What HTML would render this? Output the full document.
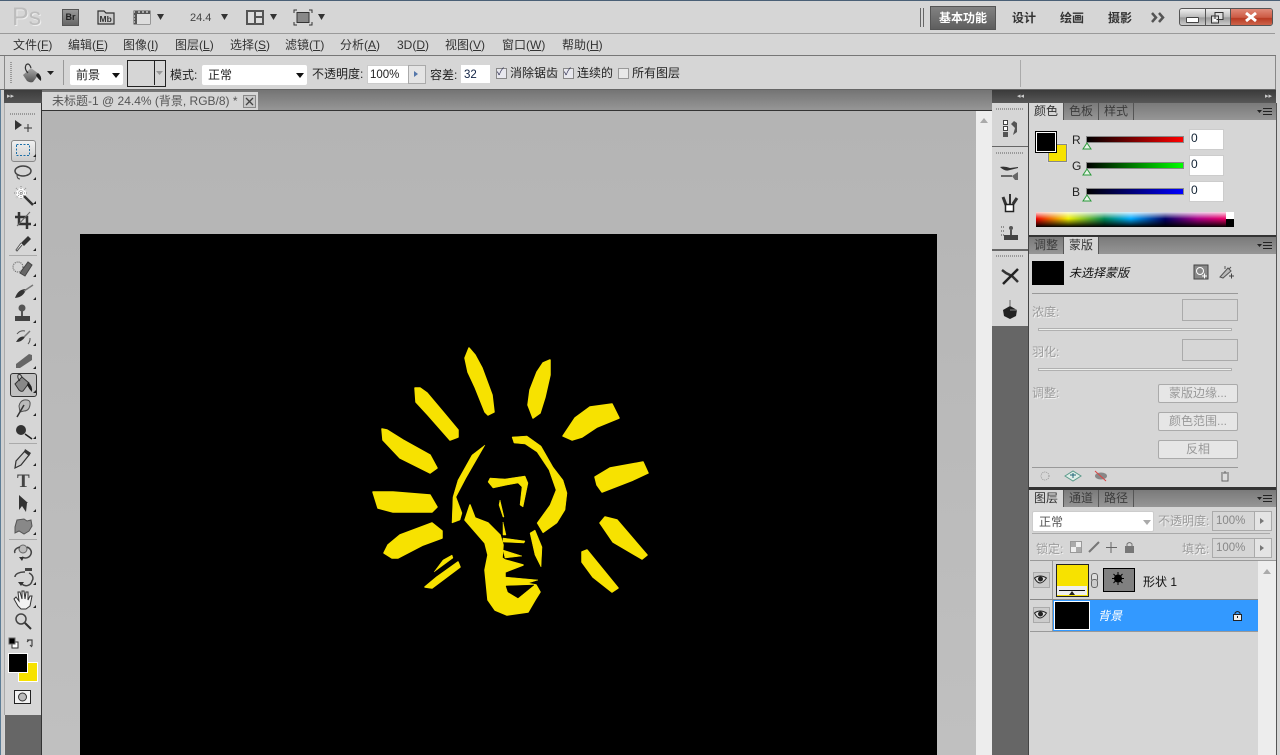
<!DOCTYPE html>
<html><head><meta charset="utf-8"><style>
html,body{margin:0;padding:0;width:1280px;height:755px;overflow:hidden;background:#d6d6d6}
body{position:relative;font-family:"Liberation Sans","WenQuanYi Zen Hei","Noto Sans CJK SC",sans-serif;font-size:12px;color:#222}
.a,.t{position:absolute}
.t{white-space:nowrap;line-height:14px}
.g{color:#9c9c9c;text-shadow:1px 1px 0 #f2f2f2}
.w{background:#fff}
.tab{position:absolute;height:17px;line-height:17px;text-align:center;color:#3c3c3c;border-right:1px solid #555;width:34px}
.on{background:#d6d6d6;color:#333}
.bar{position:absolute;left:1029px;width:247px;background:linear-gradient(#7a7a7a,#969696)}
.btn{position:absolute;left:1158px;width:78px;height:17px;line-height:17px;background:#e6e6e6;border:1px solid #aaa;border-radius:2px;text-align:center;color:#999}
svg{position:absolute;overflow:visible}
</style></head><body>
<div class="a" style="left:0;top:0;width:1280px;height:1px;background:#4a6076"></div>
<div class="a" style="left:0;top:33px;width:1275px;height:1px;background:#9a9a9a"></div>
<div class="a" style="left:0;top:55px;width:1276px;height:1px;background:#777"></div>
<div class="a" style="left:1275px;top:56px;width:1px;height:33px;background:#888"></div>
<div class="a" style="left:0;top:89px;width:1276px;height:1px;background:#666"></div>

<!-- title row -->
<div class="t" style="left:12px;top:3px;font-size:25px;line-height:28px;color:#bdbdbd;text-shadow:1px 1px 0 #eee">Ps</div>
<div class="a" style="left:62px;top:9px;width:15px;height:15px;background:linear-gradient(#999,#666);border:1px solid #555;color:#222;font:bold 9px/15px 'Liberation Sans';text-align:center">Br</div>
<svg style="left:97px;top:9px" width="20" height="17"><path d="M1 15V2H7L9 4H17V15Z" fill="#ccc" stroke="#333" stroke-width="1.2"/><text x="2.500" y="13" font-size="8.500" font-weight="bold" fill="#333" font-family="Liberation Sans">Mb</text></svg>
<svg style="left:133px;top:10px" width="18" height="15"><rect x=".5" y=".5" width="17" height="14" fill="#555"/><rect x="4" y="4" width="13" height="10" fill="#ddd"/><path d="M1 2h1M5 2h2M9 2h2M13 2h2M1 6h1M1 9h1M1 12h1" stroke="#fff"/></svg>
<svg style="left:156px;top:14px" width="9" height="6"><path d="M1 0H8L4.500 6Z" fill="#333"/></svg>
<div class="t" style="left:190px;top:11px;font-size:11px;color:#444">24.4</div>
<svg style="left:220px;top:14px" width="9" height="6"><path d="M1 0H8L4.500 6Z" fill="#333"/></svg>
<svg style="left:246px;top:10px" width="18" height="15"><rect width="18" height="15" fill="#555"/><path d="M2 2h6v11H2zM10 2h6v4h-6zM10 8h6v5h-6z" fill="#ddd"/></svg>
<svg style="left:269px;top:14px" width="9" height="6"><path d="M1 0H8L4.500 6Z" fill="#333"/></svg>
<svg style="left:294px;top:10px" width="18" height="15"><path d="M0 3V0H3M15 0H18V3M18 12V15H15M3 15H0V12" fill="none" stroke="#333"/><rect x="3" y="2.500" width="12" height="10" fill="#888" stroke="#333"/></svg>
<svg style="left:317px;top:14px" width="9" height="6"><path d="M1 0H8L4.500 6Z" fill="#333"/></svg>

<div class="a" style="left:920px;top:8px;width:1px;height:19px;background:#666"></div>
<div class="a" style="left:923px;top:8px;width:1px;height:19px;background:#666"></div>
<div class="a" style="left:930px;top:6px;width:64px;height:22px;background:linear-gradient(#828282,#5e5e5e);border:1px solid #555;color:#fff;font-weight:bold;line-height:22px;text-align:center">基本功能</div>
<div class="t" style="left:1012px;top:11px;font-weight:bold;color:#333">设计</div>
<div class="t" style="left:1060px;top:11px;font-weight:bold;color:#333">绘画</div>
<div class="t" style="left:1108px;top:11px;font-weight:bold;color:#333">摄影</div>
<svg style="left:1151px;top:12px" width="15" height="11"><path d="M1 1L5 5.500 1 10M8 1L12 5.500 8 10" fill="none" stroke="#555" stroke-width="2.500"/></svg>
<div class="a" style="left:1179px;top:8px;width:92px;height:16px;border:1px solid #555;border-radius:3px;overflow:hidden;background:linear-gradient(#eee,#bbb 50%,#999 55%,#ccc)">
<div class="a" style="left:25px;top:0;width:1px;height:17px;background:#555"></div>
<div class="a" style="left:50px;top:0;width:1px;height:17px;background:#555"></div>
<div class="a" style="left:51px;top:0;width:41px;height:17px;background:linear-gradient(#e08a78,#cc5a44 50%,#b83a22 55%,#d06a50)"></div>
</div>
<div class="a" style="left:1186px;top:17px;width:11px;height:4px;background:#fff;border:1px solid #444;border-radius:1px"></div>
<svg style="left:1211px;top:12px" width="13" height="12"><path d="M4 .5h8v7H4zM.5 4h7v7h-7z" fill="#ddd" stroke="#333"/><path d="M2.500 7h3v2h-3z" fill="#fff"/></svg>
<svg style="left:1244px;top:12px" width="14" height="10"><path d="M2 1L12 9M12 1L2 9" stroke="#fff" stroke-width="3"/></svg>

<!-- menu -->
<div class="t" style="left:13px;top:38px;color:#333">文件(<u>F</u>)</div>
<div class="t" style="left:68px;top:38px;color:#333">编辑(<u>E</u>)</div>
<div class="t" style="left:123px;top:38px;color:#333">图像(<u>I</u>)</div>
<div class="t" style="left:175px;top:38px;color:#333">图层(<u>L</u>)</div>
<div class="t" style="left:230px;top:38px;color:#333">选择(<u>S</u>)</div>
<div class="t" style="left:285px;top:38px;color:#333">滤镜(<u>T</u>)</div>
<div class="t" style="left:340px;top:38px;color:#333">分析(<u>A</u>)</div>
<div class="t" style="left:397px;top:38px;color:#333">3D(<u>D</u>)</div>
<div class="t" style="left:445px;top:38px;color:#333">视图(<u>V</u>)</div>
<div class="t" style="left:502px;top:38px;color:#333">窗口(<u>W</u>)</div>
<div class="t" style="left:562px;top:38px;color:#333">帮助(<u>H</u>)</div>

<!-- options bar -->
<div class="a" style="left:4px;top:56px;width:1px;height:33px;background:#888"></div>
<div class="a" style="left:10px;top:62px;width:2px;height:22px;background:repeating-linear-gradient(#999 0 1px,transparent 1px 2px)"></div>
<svg style="left:22px;top:63px" width="20" height="20"><defs><linearGradient id="bk" x1="0" y1="0" x2="0" y2="1"><stop offset="0" stop-color="#aaa"/><stop offset="1" stop-color="#555"/></linearGradient></defs><path d="M1 12L9 5 17 11 11 19Q8 20 5 18Z" fill="url(#bk)"/><path d="M9 5Q7 -1 4 2 2 6 6 10" fill="none" stroke="#333" stroke-width="1.200"/><path d="M16 10Q20 13 19 18 15 15 14 12Z" fill="#222"/></svg>
<svg style="left:47px;top:71px" width="7" height="4"><path d="M0 0H7L3.500 4Z" fill="#222"/></svg>
<div class="a" style="left:63px;top:60px;width:1px;height:25px;background:#999"></div>
<div class="a w" style="left:70px;top:65px;width:53px;height:20px;border-radius:2px"></div>
<div class="t" style="left:76px;top:68px">前景</div>
<svg style="left:112px;top:73px" width="8" height="5"><path d="M0 0H8L4 5Z" fill="#111"/></svg>
<div class="a" style="left:127px;top:60px;width:37px;height:25px;border:1px solid #222;background:#d6d6d6"></div>
<div class="a" style="left:154px;top:60px;width:1px;height:25px;background:#222"></div>
<svg style="left:156px;top:71px" width="7" height="4"><path d="M0 0H7L3.500 4Z" fill="#999"/></svg>
<div class="t" style="left:170px;top:68px">模式:</div>
<div class="a w" style="left:202px;top:65px;width:105px;height:20px;border-radius:2px"></div>
<div class="t" style="left:208px;top:68px">正常</div>
<svg style="left:296px;top:73px" width="8" height="5"><path d="M0 0H8L4 5Z" fill="#111"/></svg>
<div class="t" style="left:312px;top:67px">不透明度:</div>
<div class="a w" style="left:367px;top:65px;width:40px;height:17px;border:1px solid #ccc"></div>
<div class="t" style="left:370px;top:68px;font-size:11.500px">100%</div>
<div class="a" style="left:408px;top:65px;width:16px;height:17px;background:#e4e4e4;border:1px solid #aaa"></div>
<svg style="left:414px;top:71px" width="4" height="6"><path d="M0 0L4 3 0 6Z" fill="#57a"/></svg>
<div class="t" style="left:430px;top:68px">容差:</div>
<div class="a w" style="left:461px;top:65px;width:29px;height:18px"></div>
<div class="t" style="left:464px;top:68px;font-size:11.500px;color:#124">32</div>
<div class="a" style="left:496px;top:68px;width:9px;height:9px;background:#e8e8ee;border:1px solid #888"></div>
<div class="t" style="left:497px;top:66px;font-size:10px;color:#335">✓</div>
<div class="t" style="left:510px;top:66px">消除锯齿</div>
<div class="a" style="left:563px;top:68px;width:9px;height:9px;background:#e8e8ee;border:1px solid #888"></div>
<div class="t" style="left:564px;top:66px;font-size:10px;color:#335">✓</div>
<div class="t" style="left:577px;top:66px">连续的</div>
<div class="a" style="left:618px;top:68px;width:9px;height:9px;background:#e8e8e8;border:1px solid #999"></div>
<div class="t" style="left:632px;top:66px">所有图层</div>
<div class="a" style="left:1020px;top:60px;width:1px;height:27px;background:#aaa"></div>

<!-- tab bar and canvas -->
<div class="a" style="left:4px;top:90px;width:38px;height:13px;background:linear-gradient(#3c3c3c,#555)"></div>
<div class="t" style="left:7px;top:92px;font-size:7px;line-height:9px;color:#ccc">▸▸</div>
<div class="a" style="left:42px;top:90px;width:950px;height:21px;background:linear-gradient(#747474,#969696);border-bottom:1px solid #333;box-sizing:border-box"></div>
<div class="a" style="left:42px;top:92px;width:216px;height:18px;background:#d6d6d6"></div>
<div class="t" style="left:52px;top:94px;color:#555;font-size:12px">未标题-1 @ 24.4% (背景, RGB/8) *</div>
<div class="a" style="left:243px;top:95px;width:11px;height:11px;background:#c8c8c8;border:1px solid #888"></div>
<svg style="left:245px;top:97px" width="9" height="9"><path d="M1 1L8 8M8 1L1 8" stroke="#444" stroke-width="1.300"/></svg>
<div class="a" style="left:42px;top:111px;width:934px;height:644px;background:linear-gradient(#b4b4b4,#c0c0c0)"></div>
<div class="a" style="left:976px;top:111px;width:16px;height:644px;background:#ededed"></div>
<svg style="left:980px;top:118px" width="8" height="5"><path d="M0 5L4 0 8 5Z" fill="#aaa"/></svg>
<div class="a" style="left:80px;top:234px;width:857px;height:521px;background:#000"></div>

<!-- bulb -->
<svg style="left:0;top:0" width="1280" height="755" fill="#f7e200" stroke="#f7e200" stroke-width="1.500" stroke-linejoin="round">
<path d="M469 348L465 358 468 372 475 387 485 412 488 415 494 412 492 395 482 368 475 355Z"/>
<path d="M415 388L416 402 428 415 450 440 458 437 458 430 443 412 427 393 420 388Z"/>
<path d="M382 429L383 440 400 458 430 473 437 468 430 455 403 440 387 430Z"/>
<path d="M550 360L543 363 537 372 530 390 528 405 533 418 540 413 545 397 550 375Z"/>
<path d="M563 436L575 418 590 407 612 404 619 418 597 427 582 437 572 440Z"/>
<path d="M595 477L610 468 643 462 648 473 633 480 602 492 597 485Z"/>
<path d="M373 492L378 508 393 512 432 512 437 507 430 495 393 492Z"/>
<path d="M384 553L392 558 398 558 423 545 442 538 442 531 432 523 400 535 388 545Z"/>
<path d="M425 587L432 588 460 567 458 562 437 577Z"/>
<path d="M434 572L453 558 452 555 443 560Z" stroke-width=".5"/>
<path d="M600 523L605 517 617 520 647 555 642 559 613 542Z"/>
<path d="M582 552L587 550 618 588 612 592 593 577 582 562Z"/>
<!-- bulb outline -->
<path d="M512 437L527 436 541 446 553 467 563 480 567 493 565 510 557 523 543 533 537 523 550 505 556 490 549 470 537 452 525 444 514 443Z" stroke-width=".5"/>
<path d="M485 445L472 455 458 480 453 497 452 523 460 520 462 513 456 497 466 478Z" stroke-width=".5"/>
<path d="M488 482L493 488 507 485 518 483 522 487 520 505 523 507 528 483 525 476 505 479 490 478Z" stroke-width=".5"/>
<!-- base -->
<path d="M465 520L470 505 475 518 488 523 500 535 503 545 502 558 505 560 523 565 505 572 505 578 520 582 536 585 540 592 535 600 528 612 507 615 495 610 488 600 485 570 488 555 485 543Z"/>
<path d="M503 538L525 541 524 543 503 542Z" stroke-width=".5"/>
<path d="M503 550L522 556 505 558Z" stroke-width=".5"/>
<path d="M530 533L535 530 542 547 541 567 535 555Z" stroke-width=".5"/>
<path d="M500 500L504 517 503 517 499 505Z" stroke-width=".5"/>
<path d="M503 522L506 535 503 535Z" stroke-width=".5"/>
<path d="M505 577L538 580 525 584 505 581Z" stroke-width=".5"/>
<path d="M506 586L534 585 518 598 508 592Z" fill="#000" stroke="#000" stroke-width=".5"/>
</svg>

<!-- tool panel -->
<div class="a" style="left:0;top:90px;width:1px;height:665px;background:#5d7d96"></div>
<div class="a" style="left:1px;top:90px;width:3px;height:665px;background:#d0d0d0"></div>
<div class="a" style="left:4px;top:103px;width:37px;height:612px;background:#d6d6d6;border-left:1px solid #aaa"></div>
<div class="a" style="left:5px;top:715px;width:36px;height:40px;background:#666"></div>
<div class="a" style="left:41px;top:103px;width:1px;height:652px;background:#333"></div>
<div class="a" style="left:10px;top:113px;width:26px;height:2px;background:repeating-linear-gradient(90deg,#999 0 1px,transparent 1px 2px)"></div>
<div class="a" style="left:9px;top:255px;width:28px;height:1px;background:#aaa"></div>
<div class="a" style="left:9px;top:443px;width:28px;height:1px;background:#aaa"></div>
<div class="a" style="left:9px;top:539px;width:28px;height:1px;background:#aaa"></div>
<div class="a" style="left:11px;top:140px;width:23px;height:20px;background:linear-gradient(#f0f0f0,#ccc);border:1px solid #888;border-radius:3px"></div>
<div class="a" style="left:10px;top:373px;width:25px;height:22px;background:#c0c0c0;border:1px solid #333;border-radius:3px"></div>
<svg style="left:0;top:0" width="44" height="755">
<path d="M15 120V130L22 125Z" fill="#333"/><path d="M24 128H32M28 124V132" stroke="#333"/>
<rect x="16.500" y="144.500" width="13" height="11" fill="none" stroke="#1a6fa8" stroke-dasharray="2 1.500"/>
<ellipse cx="23" cy="171" rx="8" ry="5" fill="none" stroke="#444" stroke-width="1.500"/><path d="M17 175Q17 179 20 179" fill="none" stroke="#444"/>
<circle cx="21" cy="193" r="5" fill="#fff"/><path d="M14 193h14M21 186v14M16 188l10 10M26 188l-10 10" stroke="#888" stroke-dasharray="1 1"/><path d="M24 196L33 205" stroke="#333" stroke-width="2.500"/>
<path d="M19 212V224H31M15 217H27V229" fill="none" stroke="#333" stroke-width="2.500"/><path d="M17 226L30 212" stroke="#666"/>
<path d="M28 236L31 239 24 246 21 243Z" fill="#333"/><path d="M22 245L17 251 16 250 21 243" fill="#fff" stroke="#555"/>
<circle cx="18" cy="267" r="5" fill="none" stroke="#555" stroke-dasharray="1 1"/><path d="M20 273L28 262 32 265 25 276Z" fill="#666" stroke="#444"/>
<path d="M15 298Q18 289 26 289 24 297 15 298Z" fill="#333"/><path d="M24 291L33 285" stroke="#777" stroke-width="1.500"/>
<circle cx="22" cy="308" r="3.500" fill="#555"/><rect x="21" y="310" width="2" height="6" fill="#555"/><rect x="15" y="316" width="15" height="5" fill="#444"/>
<path d="M16 342Q20 335 25 337 22 342 16 342Z" fill="#333"/><path d="M24 337L30 331" stroke="#777" stroke-width="1.500"/><path d="M17 334A8 8 0 0 1 25 331M30 338A8 8 0 0 1 28 344" fill="none" stroke="#555"/>
<path d="M16 364L29 354 32 355 32 360 20 368 16 368Z" fill="#666"/>
<path d="M15 384L22 377 29 383 23 391Q21 392 19 390Z" fill="#888" stroke="#333"/><path d="M22 377Q20 373 18 375 17 378 20 381" fill="none" stroke="#333"/><path d="M28 382Q33 386 32 392 29 389 27 385Z" fill="#222"/>
<path d="M24 400Q31 399 30 405 29 411 24 411L20 412 19 406Q20 401 24 400Z" fill="#bbb" stroke="#555"/><path d="M17 417L24 405" stroke="#333" stroke-width="1.500"/>
<circle cx="21" cy="430" r="5" fill="#333"/><path d="M25 434L32 439" stroke="#222" stroke-width="1.500"/>
<path d="M25 451L29 455 21 465 15 468 16 461Z" fill="#ccc" stroke="#333" stroke-width="1.200"/><path d="M25 449L31 453 29 456 24 452Z" fill="#333"/>
<text x="17" y="487" font-family="Liberation Serif" font-size="19" font-weight="bold" fill="#444">T</text>
<path d="M19 495V510L22 506 26 512 27 503 28 503Z" fill="#333"/>
<path d="M17 520L24 519 27 521 31 520 32 526 29 531 24 534 19 531 15 533 15 527Z" fill="#888" stroke="#555"/>
<circle cx="23" cy="549" r="4" fill="#bbb" stroke="#666"/><path d="M15 553A9 5 0 0 1 20 547M27 547A8 6 0 0 1 31 554 6 6 0 0 1 22 557" fill="none" stroke="#444" stroke-width="1.500"/><path d="M19 557L24 557 22 561Z" fill="#333"/>
<rect x="25" y="568" width="7" height="3" fill="#444"/><path d="M15 577A9 5 0 0 1 25 572M29 573A8 6 0 0 1 32 581 6 6 0 0 1 22 584" fill="none" stroke="#444" stroke-width="1.500"/><path d="M18 582L24 582 21 586Z" fill="#333"/>
<path d="M18 606L14 599 16 597 19 601 18 592H20L22 599 22 591H24L25 599 26 592H28L28 600 30 596H32L30 606 26 609H21Z" fill="#f2f2f2" stroke="#333"/>
<circle cx="21" cy="619" r="5" fill="none" stroke="#444" stroke-width="1.500"/><path d="M25 623L31 629" stroke="#333" stroke-width="2"/>
<rect x="12" y="642" width="6" height="6" fill="#fff" stroke="#333"/><rect x="9" y="638" width="6" height="6" fill="#000" stroke="#666"/>
<path d="M27 640H32V646M27 642L29 640M30 645L32 647" fill="none" stroke="#444" stroke-width="1.200"/>
<rect x="18.500" y="662.500" width="19" height="19" fill="#f7e200" stroke="#fff"/><rect x="8.500" y="653.500" width="19" height="19" fill="#000" stroke="#fff"/>
<rect x="14.500" y="690.500" width="16" height="13" fill="#f2f2f2" stroke="#222"/><circle cx="22.500" cy="697" r="4" fill="#bbb" stroke="#333"/>
<path fill="#222" d="M33 157h3v-3zM33 180h3v-3zM33 204h3v-3zM33 226h3v-3zM33 251h3v-3zM33 277h3v-3zM33 300h3v-3zM33 323h3v-3zM33 346h3v-3zM33 369h3v-3zM33 393h3v-3zM33 416h3v-3zM33 439h3v-3zM33 466h3v-3zM33 489h3v-3zM33 512h3v-3zM33 535h3v-3zM33 585h3v-3zM33 608h3v-3z"/>
</svg>

<!-- dock -->
<div class="a" style="left:992px;top:90px;width:284px;height:13px;background:linear-gradient(#3a3a3a,#585858)"></div>
<div class="t" style="left:1017px;top:92px;font-size:7px;line-height:9px;color:#ccc">◂◂</div>
<div class="t" style="left:1265px;top:92px;font-size:7px;line-height:9px;color:#ccc">▸▸</div>
<div class="a" style="left:992px;top:103px;width:284px;height:652px;background:#666"></div>
<div class="a" style="left:992px;top:103px;width:36px;height:43px;background:#d6d6d6"></div>
<div class="a" style="left:992px;top:147px;width:36px;height:102px;background:#d6d6d6"></div>
<div class="a" style="left:992px;top:251px;width:36px;height:75px;background:#d6d6d6"></div>
<div class="a" style="left:996px;top:108px;width:27px;height:2px;background:repeating-linear-gradient(90deg,#999 0 1px,transparent 1px 2px)"></div>
<div class="a" style="left:996px;top:152px;width:27px;height:2px;background:repeating-linear-gradient(90deg,#999 0 1px,transparent 1px 2px)"></div>
<div class="a" style="left:996px;top:255px;width:27px;height:2px;background:repeating-linear-gradient(90deg,#999 0 1px,transparent 1px 2px)"></div>
<svg style="left:0;top:0" width="1040" height="340">
<rect x="1003.500" y="120.500" width="4" height="4" fill="#fff" stroke="#444"/><rect x="1003.500" y="126.500" width="4" height="4" fill="#fff" stroke="#444"/><rect x="1003" y="132" width="5" height="5" fill="#555"/>
<path d="M1011 124L1014 121 1017 123 1017 132 1013 135 1015 128Z" fill="#555"/>
<path d="M1000 167Q1005 172 1010 170L1018 168V167L1010 168Q1005 166 1000 167Z" fill="#333"/><path d="M1001 176H1012" stroke="#444" stroke-width="1.500"/><path d="M1012 176L1018 172V180L1015 180Z" fill="#666"/>
<path d="M1003 197L1006 205M1017 198L1013 204" stroke="#333" stroke-width="3"/><path d="M1010 194V204" stroke="#333" stroke-width="2"/><rect x="1005.500" y="204.500" width="8" height="7" fill="#fff" stroke="#222" stroke-width="1.500"/>
<path d="M1001 227h4M1001 231h4M1001 235h4" stroke="#444" stroke-dasharray="1 1"/><circle cx="1011" cy="228" r="2" fill="#555"/><rect x="1010" y="230" width="2" height="5" fill="#555"/><rect x="1004" y="235" width="14" height="5" fill="#444"/>
<path d="M1002 270L1006 273 1012 276 1018 282" stroke="#333" stroke-width="2.500" fill="none"/><path d="M1018 269L1003 284" stroke="#222" stroke-width="2.500"/>
<path d="M1003 310L1010 306 1017 310 1016 316 1010 319 1004 316Z" fill="#222"/><path d="M1010 300V306" stroke="#666"/>
<path d="M1010 310L1017 310" stroke="#888"/>
</svg>
<div class="a" style="left:1028px;top:103px;width:1px;height:652px;background:#444"></div>

<!-- color panel -->
<div class="a" style="left:1029px;top:103px;width:247px;height:132px;background:#d6d6d6"></div>
<div class="bar" style="top:103px;height:17px"></div>
<div class="tab on" style="left:1029px;top:103px">颜色</div>
<div class="tab" style="left:1064px;top:103px">色板</div>
<div class="tab" style="left:1099px;top:103px">样式</div>
<svg style="left:1257px;top:108px" width="16" height="8"><path d="M0 2H5L2.500 5Z" fill="#222"/><path d="M6 .5H15M6 3.500H15M6 6.500H15" stroke="#222"/></svg>
<div class="a" style="left:1048px;top:144px;width:17px;height:16px;background:#f7e200;border:1px solid #888;outline:1px solid #ddd"></div>
<div class="a" style="left:1036px;top:132px;width:18px;height:18px;background:#000;border:1px solid #fff;outline:1px solid #000"></div>
<div class="t" style="left:1072px;top:133px">R</div><div class="t" style="left:1072px;top:159px">G</div><div class="t" style="left:1072px;top:185px">B</div>
<div class="a" style="left:1086px;top:136px;width:96px;height:5px;border:1px solid #888;background:linear-gradient(90deg,#000,#f00)"></div>
<div class="a" style="left:1086px;top:162px;width:96px;height:5px;border:1px solid #888;background:linear-gradient(90deg,#000,#0f0)"></div>
<div class="a" style="left:1086px;top:188px;width:96px;height:5px;border:1px solid #888;background:linear-gradient(90deg,#000,#00f)"></div>
<svg style="left:1082px;top:142px" width="10" height="8"><path d="M1 7L5 1 9 7Z" fill="#e8f4e8" stroke="#2a9a3a"/></svg>
<svg style="left:1082px;top:168px" width="10" height="8"><path d="M1 7L5 1 9 7Z" fill="#e8f4e8" stroke="#2a9a3a"/></svg>
<svg style="left:1082px;top:194px" width="10" height="8"><path d="M1 7L5 1 9 7Z" fill="#e8f4e8" stroke="#2a9a3a"/></svg>
<div class="a w" style="left:1189px;top:129px;width:33px;height:19px;border:1px solid #ccc"></div>
<div class="a w" style="left:1189px;top:155px;width:33px;height:19px;border:1px solid #ccc"></div>
<div class="a w" style="left:1189px;top:181px;width:33px;height:19px;border:1px solid #ccc"></div>
<div class="t" style="left:1191px;top:131px;color:#123">0</div><div class="t" style="left:1191px;top:157px;color:#123">0</div><div class="t" style="left:1191px;top:183px;color:#123">0</div>
<div class="a" style="left:1036px;top:212px;width:190px;height:15px;background:linear-gradient(rgba(255,255,255,.85),rgba(255,255,255,0) 45%,rgba(0,0,0,0) 45%,#000),linear-gradient(90deg,#e00,#ee0 17%,#085 36%,#0af 50%,#006 68%,#a08 85%,#e06)"></div>
<div class="a w" style="left:1226px;top:212px;width:8px;height:7px"></div>
<div class="a" style="left:1226px;top:219px;width:8px;height:8px;background:#000"></div>

<!-- masks panel -->
<div class="a" style="left:1029px;top:235px;width:247px;height:2px;background:#333"></div>
<div class="a" style="left:1029px;top:237px;width:247px;height:250px;background:#d6d6d6"></div>
<div class="bar" style="top:237px;height:17px"></div>
<div class="tab" style="left:1029px;top:237px">调整</div>
<div class="tab on" style="left:1064px;top:237px">蒙版</div>
<svg style="left:1257px;top:242px" width="16" height="8"><path d="M0 2H5L2.500 5Z" fill="#222"/><path d="M6 .5H15M6 3.500H15M6 6.500H15" stroke="#222"/></svg>
<div class="a" style="left:1032px;top:261px;width:32px;height:24px;background:#000"></div>
<div class="t" style="left:1069px;top:266px;font-style:italic;color:#111">未选择蒙版</div>
<svg style="left:1194px;top:265px" width="14" height="14"><rect width="14" height="14" fill="#888" stroke="#444"/><circle cx="6" cy="6" r="3.500" fill="none" stroke="#fff"/><path d="M8 11H13M10.500 8.500V13.500" stroke="#fff"/></svg>
<svg style="left:1219px;top:265px" width="15" height="14"><path d="M1 12L9 3 12 6 4 13ZM6 1V4M12 2L10 4" fill="#bbb" stroke="#555"/><path d="M10 11H15M12.500 8.500V13.500" stroke="#444"/></svg>
<div class="a" style="left:1032px;top:293px;width:206px;height:1px;background:#999"></div>
<div class="t g" style="left:1032px;top:305px">浓度:</div>
<div class="a" style="left:1182px;top:299px;width:54px;height:20px;background:#d6d6d6;border:1px solid #f0f0f0;outline:1px solid #aaa;outline-offset:-1px"></div>
<div class="a" style="left:1038px;top:328px;width:194px;height:3px;background:#eef0ee;border:1px solid #b0b0b0;box-sizing:border-box"></div>
<div class="t g" style="left:1032px;top:345px">羽化:</div>
<div class="a" style="left:1182px;top:339px;width:54px;height:20px;background:#d6d6d6;border:1px solid #f0f0f0;outline:1px solid #aaa;outline-offset:-1px"></div>
<div class="a" style="left:1038px;top:368px;width:194px;height:3px;background:#eef0ee;border:1px solid #b0b0b0;box-sizing:border-box"></div>
<div class="t g" style="left:1032px;top:386px">调整:</div>
<div class="btn" style="top:384px">蒙版边缘...</div>
<div class="btn" style="top:412px">颜色范围...</div>
<div class="btn" style="top:440px">反相</div>
<div class="a" style="left:1032px;top:467px;width:206px;height:1px;background:#999"></div>
<svg style="left:1038px;top:469px" width="200" height="14"><circle cx="7" cy="7" r="4" fill="none" stroke="#999" stroke-dasharray="1 1"/><path d="M27 7L35 2 43 7 35 12Z" fill="#dfeee8" stroke="#5a9a8a"/><path d="M32 6H38M35 4V9" stroke="#267"/><ellipse cx="63" cy="7" rx="6" ry="3.500" fill="#888"/><path d="M57 2L68 12" stroke="#d44"/><path d="M183 4H191M184 5V12H190V5M187 2V4" fill="#ddd" stroke="#666"/></svg>

<!-- layers panel -->
<div class="a" style="left:1029px;top:487px;width:247px;height:3px;background:#333"></div>
<div class="a" style="left:1029px;top:490px;width:247px;height:265px;background:#d6d6d6"></div>
<div class="bar" style="top:490px;height:17px"></div>
<div class="tab on" style="left:1029px;top:490px">图层</div>
<div class="tab" style="left:1064px;top:490px">通道</div>
<div class="tab" style="left:1099px;top:490px">路径</div>
<svg style="left:1257px;top:495px" width="16" height="8"><path d="M0 2H5L2.500 5Z" fill="#222"/><path d="M6 .5H15M6 3.500H15M6 6.500H15" stroke="#222"/></svg>
<div class="a w" style="left:1032px;top:511px;width:120px;height:19px;border:1px solid #ccc;border-radius:2px"></div>
<div class="t" style="left:1039px;top:515px;color:#555">正常</div>
<svg style="left:1143px;top:520px" width="8" height="5"><path d="M0 0H8L4 5Z" fill="#aaa"/></svg>
<div class="t g" style="left:1158px;top:514px">不透明度:</div>
<div class="a" style="left:1212px;top:511px;width:41px;height:18px;background:#d6d6d6;border:1px solid #aaa"></div>
<div class="t" style="left:1216px;top:514px;color:#888;font-size:11.500px">100%</div>
<div class="a" style="left:1254px;top:511px;width:16px;height:18px;background:#e4e4e4;border:1px solid #aaa"></div>
<svg style="left:1260px;top:518px" width="4" height="6"><path d="M0 0L4 3 0 6Z" fill="#777"/></svg>
<div class="a" style="left:1032px;top:533px;width:238px;height:1px;background:#aaa"></div>
<div class="t g" style="left:1036px;top:542px">锁定:</div>
<svg style="left:1070px;top:541px" width="68" height="13"><rect x=".5" y=".5" width="11" height="11" fill="#eee" stroke="#999"/><path d="M1 1h5v5H1zM6 6h5v5H6z" fill="#aaa"/><path d="M19 11L29 1" stroke="#777" stroke-width="2"/><path d="M41 1V12M36 6.500H47" stroke="#666"/><rect x="55" y="5" width="9" height="7" fill="#777"/><path d="M57 5V3Q59.500 0 62 3V5" fill="none" stroke="#777"/></svg>
<div class="t g" style="left:1182px;top:542px">填充:</div>
<div class="a" style="left:1212px;top:538px;width:41px;height:18px;background:#d6d6d6;border:1px solid #aaa"></div>
<div class="t" style="left:1216px;top:541px;color:#888;font-size:11.500px">100%</div>
<div class="a" style="left:1254px;top:538px;width:16px;height:18px;background:#e4e4e4;border:1px solid #aaa"></div>
<svg style="left:1260px;top:545px" width="4" height="6"><path d="M0 0L4 3 0 6Z" fill="#777"/></svg>
<div class="a" style="left:1030px;top:560px;width:246px;height:1px;background:#999"></div>
<div class="a" style="left:1258px;top:561px;width:18px;height:194px;background:#ededed"></div>
<svg style="left:1263px;top:569px" width="8" height="5"><path d="M0 5L4 0 8 5Z" fill="#aaa"/></svg>
<div class="a" style="left:1052px;top:561px;width:1px;height:71px;background:#999"></div>
<div class="a" style="left:1030px;top:599px;width:228px;height:1px;background:#888"></div>
<div class="a" style="left:1053px;top:600px;width:205px;height:31px;background:#3399ff"></div>
<div class="a" style="left:1030px;top:631px;width:228px;height:1px;background:#999"></div>
<div class="a" style="left:1033px;top:572px;width:15px;height:14px;border:1px solid #aaa;background:#ccc"></div>
<div class="a" style="left:1033px;top:607px;width:15px;height:14px;border:1px solid #aaa;background:#ccc"></div>
<svg style="left:1034px;top:575px" width="13" height="9"><path d="M.5 3Q6 -1 12.500 3 9 8 6 8 3 8 .5 3Z" fill="#ddd" stroke="#222"/><circle cx="6.500" cy="4" r="2.500" fill="#222"/></svg>
<svg style="left:1034px;top:610px" width="13" height="9"><path d="M.5 3Q6 -1 12.500 3 9 8 6 8 3 8 .5 3Z" fill="#ddd" stroke="#222"/><circle cx="6.500" cy="4" r="2.500" fill="#222"/></svg>
<div class="a" style="left:1056px;top:564px;width:31px;height:31px;border:1px solid #222;background:#f7e200"></div>
<div class="a" style="left:1057px;top:586px;width:30px;height:9px;background:#eee"></div>
<div class="a" style="left:1059px;top:590px;width:26px;height:1px;background:#111"></div>
<svg style="left:1069px;top:591px" width="6" height="4"><path d="M0 4L3 0 6 4Z" fill="#222"/></svg>
<div class="a" style="left:1091px;top:573px;width:5px;height:7px;border:1px solid #666;border-radius:3px;background:#ddd"></div>
<div class="a" style="left:1091px;top:579px;width:5px;height:7px;border:1px solid #666;border-radius:3px;background:#ccc"></div>
<div class="a" style="left:1103px;top:568px;width:30px;height:22px;background:#808080;border:1px solid #000"></div>
<svg style="left:1111px;top:572px" width="14" height="13" fill="#000"><circle cx="7" cy="6.500" r="4"/><path d="M7 0V13M1 6.500H13M2.500 2L11.500 11M11.500 2L2.500 11" stroke="#000"/></svg>
<div class="t" style="left:1143px;top:575px;color:#111">形状 1</div>
<div class="a" style="left:1054px;top:601px;width:34px;height:27px;background:#000;border:1px solid #fff"></div>
<div class="t" style="left:1098px;top:609px;color:#fff;font-style:italic">背景</div>
<svg style="left:1233px;top:610px" width="9" height="11"><rect x=".5" y="4.500" width="8" height="6" fill="#eee" stroke="#222"/><path d="M2 4V3Q4.500 0 7 3V4" fill="none" stroke="#222"/><rect x="4" y="6" width="1" height="2" fill="#222"/></svg>
<div class="a" style="left:1276px;top:103px;width:1px;height:652px;background:#555"></div>
</body></html>
